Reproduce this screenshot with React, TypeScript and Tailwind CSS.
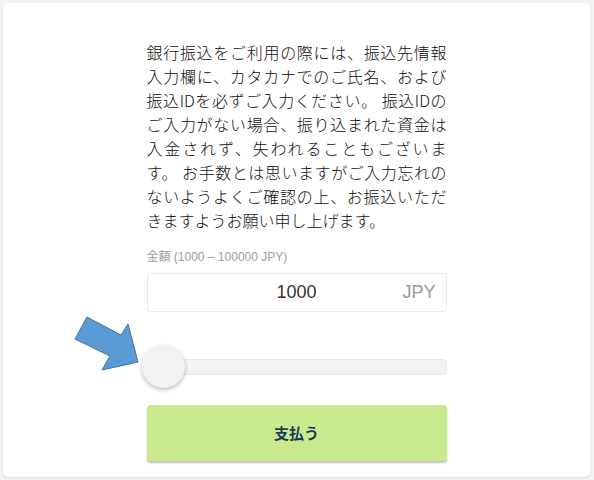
export default function App() {
  return (
    <main className="relative min-h-[480px] bg-[#f3f3f3] p-[3px] font-['Liberation_Sans','Noto_Sans_CJK_JP',sans-serif]">
      <section className="flex h-[474px] w-[587px] flex-col items-center rounded-[5px] bg-white pt-[37px] shadow-[0_1px_2px_rgba(0,0,0,0.12)]">
        <div className="w-[300px]">
          <p className="text-justify text-[16px] font-light leading-[24px] text-[#0f0f0f] font-['Noto_Sans_CJK_JP',sans-serif]">
            銀行振込をご利用の際には、振込先情報入力欄に、カタカナでのご氏名、および振込IDを必ずご入力ください。 振込IDのご入力がない場合、振り込まれた資金は入金されず、失われることもございます。 お手数とは思いますがご入力忘れのないようよくご確認の上、お振込いただきますようお願い申し上げます。
          </p>

          <label className="mt-[17px] block text-[12px] leading-[16px] text-[#9e9e9e]">
            金額 (1000 – 100000 JPY)
          </label>
          <div className="relative mt-[8px] flex h-[39px] items-center rounded-[3px] border border-[#ececec] px-[40px]">
            <span className="flex-1 text-center text-[18px] text-[#333]">1000</span>
            <span className="absolute right-[10px] text-[18px] text-[#9a9a9a]">JPY</span>
          </div>

          <div className="relative mt-[33px] flex h-[43px] items-center">
            <div className="h-[16px] w-full rounded-[4px] border border-[#e9e9e9] bg-[#f3f3f3]" />
            <div className="absolute left-[-5px] top-0 h-[43px] w-[43px] rounded-full bg-[#f2f2f2] shadow-[0_2px_4px_rgba(0,0,0,0.25)]" />
          </div>

          <button className="mt-[17px] flex h-[56px] w-full items-center justify-center rounded-[4px] bg-[#c8ea8c] text-[15px] font-bold text-[#1c3a57] shadow-[0_2px_2px_rgba(0,0,0,0.25)] font-['Noto_Sans_CJK_JP',sans-serif]">
            支払う
          </button>
        </div>
      </section>

      <svg
        className="absolute left-[70px] top-[312px]"
        width="80"
        height="70"
        viewBox="0 0 80 70"
      >
        <polygon
          points="17,5 51,23 58,12 68,50 32,58 40,44 5,27"
          fill="#5b9bd5"
          stroke="#41719c"
          strokeWidth="1"
          strokeLinejoin="miter"
        />
      </svg>
    </main>
  );
}
